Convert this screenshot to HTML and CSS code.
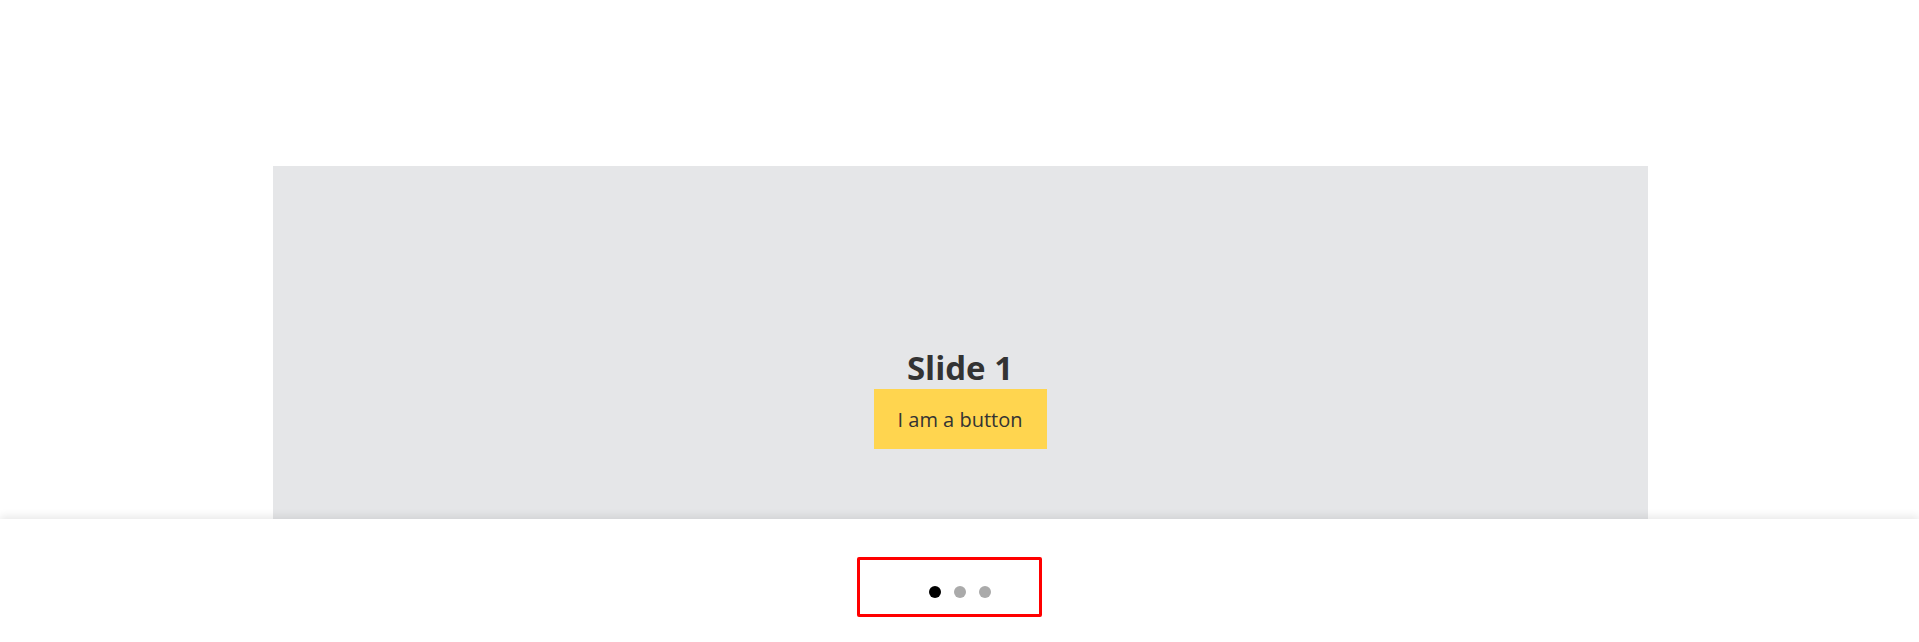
FILE: index.html
```html
<!DOCTYPE html>
<html>
<head>
<meta charset="utf-8">
<link rel="stylesheet" href="styles.css">
</head>
<body>
<main class="page">
  <section class="slide">
    <h2 class="slide-title">Slide 1</h2>
    <button class="slide-btn">I am a button</button>
  </section>
</main>
<footer class="bar">
  <div class="pager">
    <span class="dot active"></span>
    <span class="dot"></span>
    <span class="dot"></span>
  </div>
</footer>
</body>
</html>
```
FILE: styles.css
```css
html, body {
  margin: 0;
  padding: 0;
  background: #fff;
  font-family: "Open Sans", "Noto Sans", sans-serif;
  height: 642px;
  overflow: hidden;
}
.page {
  padding-top: 166px;
  display: flex;
  justify-content: center;
}
.slide {
  width: 1375px;
  height: 353px;
  margin-left: 1px;
  background: #e5e6e8;
  display: flex;
  flex-direction: column;
  align-items: center;
  padding-top: 181px;
  box-sizing: border-box;
}
.slide-title {
  margin: 0;
  font-size: 33px;
  line-height: 41px;
  font-weight: 700;
  color: #333;
}
.slide-btn {
  margin-top: 1px;
  height: 60px;
  width: 173px;
  border: none;
  background: #ffd54f;
  color: #333;
  font-family: inherit;
  font-size: 20px;
  padding: 0;
}
.bar {
  position: relative;
  z-index: 1;
  height: 123px;
  background: #fff;
  box-shadow: 0 -3px 8px rgba(0,0,0,0.09);
  display: flex;
  justify-content: center;
  padding-top: 38px;
  box-sizing: border-box;
}
.pager {
  width: 185px;
  height: 60px;
  box-sizing: border-box;
  border: 3px solid #ff0000;
  border-radius: 2px;
  margin-right: 20px;
  display: flex;
  align-items: center;
  padding-left: 69px;
  padding-top: 10px;
  gap: 13px;
}
.dot {
  width: 12px;
  height: 12px;
  border-radius: 50%;
  background: #aaa;
}
.dot.active {
  background: #000;
}
```
